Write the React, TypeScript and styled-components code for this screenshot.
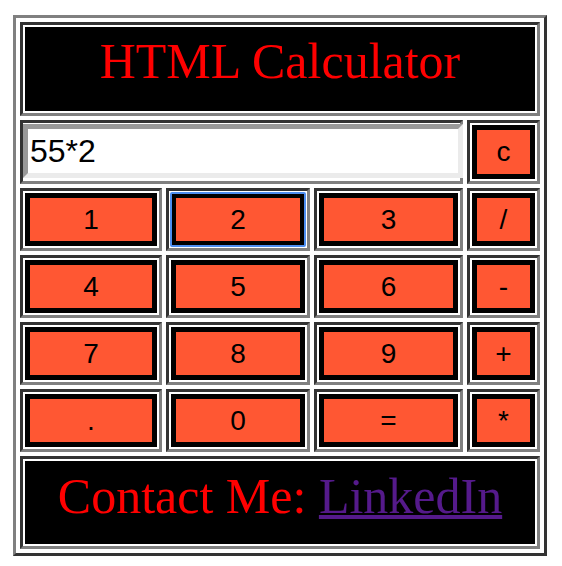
import React from 'react';
import styled, { createGlobalStyle } from 'styled-components';

const GlobalStyle = createGlobalStyle`
  body {
    margin: 0;
    background: #fff;
  }
`;

const keyRows = [
  ['1', '2', '3', '/'],
  ['4', '5', '6', '-'],
  ['7', '8', '9', '+'],
  ['.', '0', '=', '*'],
];

const App = () => {
  return (
    <>
      <GlobalStyle />
      <Table>
        <Cell $span={4}>
          <Banner>HTML Calculator</Banner>
        </Cell>
        <InputCell $span={3}>
          <Display type="text" value="55*2" readOnly />
        </InputCell>
        <Cell>
          <Key>c</Key>
        </Cell>
        {keyRows.map((row) =>
          row.map((k) => (
            <Cell key={k}>
              <Key $focused={k === '2'}>{k}</Key>
            </Cell>
          ))
        )}
        <Cell $span={4}>
          <Banner $footer>
            Contact Me: <Contact href="#">LinkedIn</Contact>
          </Banner>
        </Cell>
      </Table>
    </>
  );
};

export default App;

const Table = styled.div`
  display: grid;
  grid-template-columns: 142px 144px 149px 73px;
  grid-template-rows: 94px 64px repeat(4, 63px) 93px;
  gap: 4px;
  width: 534px;
  box-sizing: border-box;
  margin: 15px 0 0 13px;
  padding: 4px;
  border: 3px solid;
  border-color: #808080 #333 #333 #808080;
`;

const Cell = styled.div<{ $span?: number }>`
  grid-column: span ${(p) => p.$span ?? 1};
  border: 3px solid;
  border-color: #333 #808080 #808080 #333;
  padding: 2px;
  background: #fff;
  min-width: 0;
`;

const InputCell = styled(Cell)`
  padding: 1px 0 0 0;
  position: relative;
  z-index: 1;
`;

const Banner = styled.div<{ $footer?: boolean }>`
  height: 100%;
  box-sizing: border-box;
  background: #000;
  color: #f00;
  font-family: 'Liberation Serif', 'Times New Roman', serif;
  font-size: 50px;
  text-align: center;
  padding-top: ${(p) => (p.$footer ? '6px' : '5px')};
`;

const Contact = styled.a`
  color: #551a8b;
  text-decoration: underline;
  text-decoration-thickness: 4px;
`;

const Display = styled.input`
  display: block;
  width: 440px;
  height: 54px;
  box-sizing: border-box;
  margin: 0;
  padding: 0 2px;
  border: 5px solid;
  border-color: #999 #ebebeb #ebebeb #999;
  background: #fff;
  color: #000;
  font-family: 'Liberation Sans', Arial, sans-serif;
  font-size: 32px;
  outline: none;
`;

const Key = styled.button<{ $focused?: boolean }>`
  display: block;
  width: 100%;
  height: 100%;
  margin: 0;
  padding: 0;
  border: 5px solid #000;
  background: #ff5733;
  color: #000;
  font-family: 'Liberation Sans', Arial, sans-serif;
  font-size: 28px;
  cursor: pointer;
  outline: ${(p) => (p.$focused ? '2px solid #4d8ef0' : 'none')};
  outline-offset: -1px;
  border-radius: ${(p) => (p.$focused ? '1px' : '0')};
`;
